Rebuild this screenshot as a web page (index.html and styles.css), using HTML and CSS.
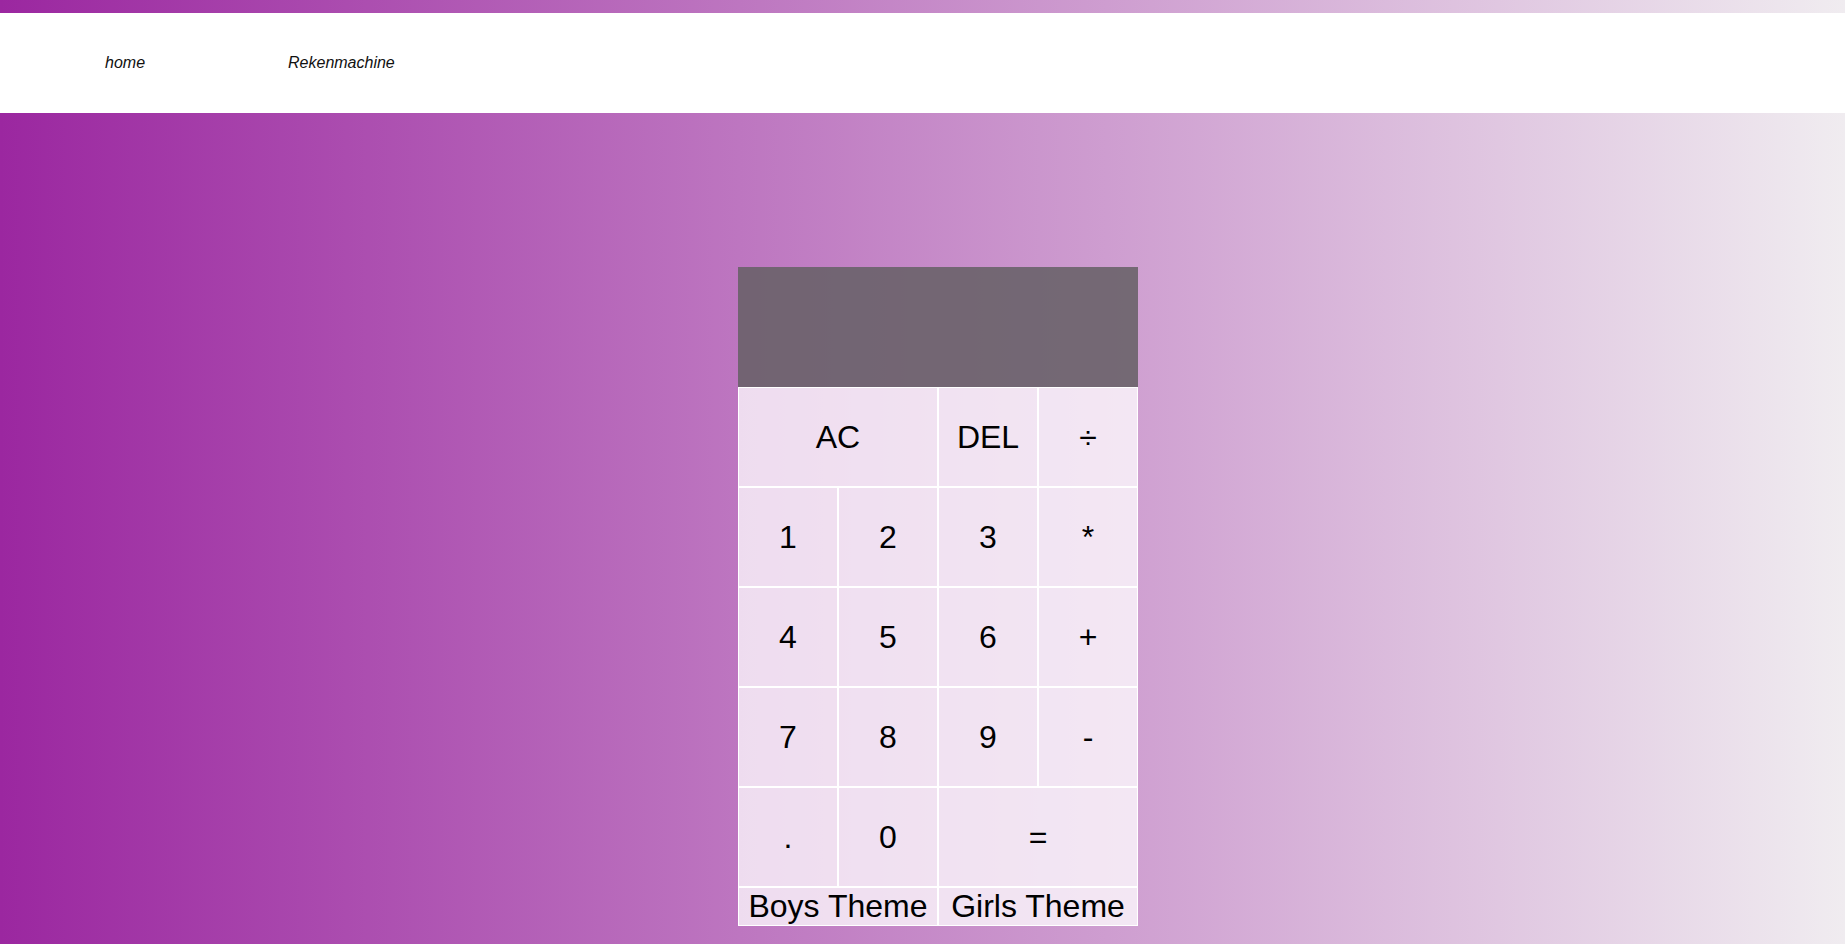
FILE: index.html
```html
<!DOCTYPE html>
<html lang="nl">
<head>
<meta charset="utf-8">
<title>Rekenmachine</title>
<link rel="stylesheet" href="styles.css">
</head>
<body>
<nav class="topnav">
  <a class="nav-link" href="#">home</a>
  <a class="nav-link" href="#">Rekenmachine</a>
</nav>
<main class="page">
  <div class="calculator-grid">
    <div class="output">
      <div class="previous-operand"></div>
      <div class="current-operand"></div>
    </div>
    <button class="key span-two">AC</button>
    <button class="key">DEL</button>
    <button class="key">÷</button>
    <button class="key">1</button>
    <button class="key">2</button>
    <button class="key">3</button>
    <button class="key">*</button>
    <button class="key">4</button>
    <button class="key">5</button>
    <button class="key">6</button>
    <button class="key">+</button>
    <button class="key">7</button>
    <button class="key">8</button>
    <button class="key">9</button>
    <button class="key">-</button>
    <button class="key">.</button>
    <button class="key">0</button>
    <button class="key span-two">=</button>
    <button class="key theme span-two">Boys Theme</button>
    <button class="key theme span-two">Girls Theme</button>
  </div>
</main>
</body>
</html>
```
FILE: styles.css
```css
* {
  box-sizing: border-box;
}

html, body {
  margin: 0;
  padding: 0;
}

body {
  min-height: 100vh;
  padding-top: 13px;
  background: linear-gradient(to right, #9b27a0, #f0ecf0);
  font-family: "Liberation Sans", Arial, sans-serif;
  overflow: hidden;
}

.topnav {
  height: 100px;
  background: #ffffff;
  display: flex;
  align-items: center;
  padding-left: 105px;
  gap: 143px;
}

.nav-link {
  font-style: italic;
  font-size: 16px;
  color: #111111;
  text-decoration: none;
}

.page {
  display: flex;
  justify-content: center;
  padding-top: 154px;
  padding-left: 31px;
}

.calculator-grid {
  display: grid;
  grid-template-columns: repeat(4, 100px);
  grid-template-rows: 120px repeat(5, 100px) auto;
}

.output {
  grid-column: 1 / -1;
  background: rgba(102, 96, 102, 0.87);
}

.key {
  font-family: "Liberation Sans", Arial, sans-serif;
  font-size: 32px;
  color: #000000;
  border: 1px solid #ffffff;
  background: rgba(255, 255, 255, 0.75);
  padding: 1px 6px;
  margin: 0;
  cursor: pointer;
  outline: none;
}

.span-two {
  grid-column: span 2;
}

.theme {
  line-height: normal;
  padding: 0 6px;
}
```
